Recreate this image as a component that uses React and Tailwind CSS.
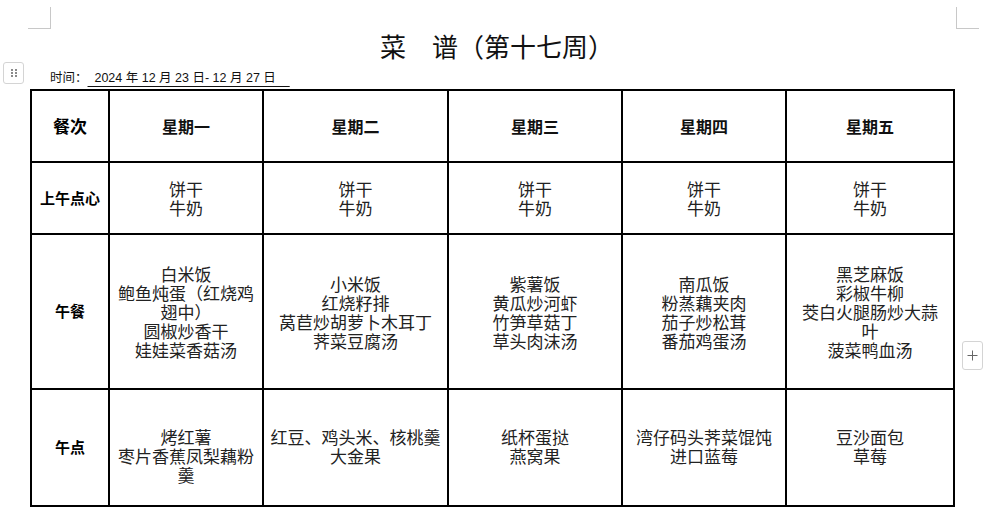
import React from 'react';

const cjk = { fontFamily: '"Noto Sans CJK SC", "Noto Sans", sans-serif' };
const mixed = { fontFamily: '"Liberation Sans", "Noto Sans CJK SC", sans-serif' };

const days = ['星期一', '星期二', '星期三', '星期四', '星期五'];

const rows = [
  {
    label: '上午点心',
    cells: [['饼干', '牛奶'], ['饼干', '牛奶'], ['饼干', '牛奶'], ['饼干', '牛奶'], ['饼干', '牛奶']],
  },
  {
    label: '午餐',
    cells: [
      ['白米饭', '鲍鱼炖蛋（红烧鸡', '翅中）', '圆椒炒香干', '娃娃菜香菇汤'],
      ['小米饭', '红烧籽排', '莴苣炒胡萝卜木耳丁', '荠菜豆腐汤'],
      ['紫薯饭', '黄瓜炒河虾', '竹笋草菇丁', '草头肉沫汤'],
      ['南瓜饭', '粉蒸藕夹肉', '茄子炒松茸', '番茄鸡蛋汤'],
      ['黑芝麻饭', '彩椒牛柳', '茭白火腿肠炒大蒜', '叶', '菠菜鸭血汤'],
    ],
  },
  {
    label: '午点',
    top: true,
    cells: [
      ['烤红薯', '枣片香蕉凤梨藕粉', '羹'],
      ['红豆、鸡头米、核桃羹', '大金果'],
      ['纸杯蛋挞', '燕窝果'],
      ['湾仔码头荠菜馄饨', '进口蓝莓'],
      ['豆沙面包', '草莓'],
    ],
  },
];

function Cell({ lines, top }) {
  return (
    <div
      className={`bg-white flex flex-col items-center px-[6px] text-[17px] leading-[19px] text-[#222] ${
        top ? 'justify-start pt-[37px]' : 'justify-center'
      }`}
    >
      {lines.map((l, i) => (
        <div key={i} className="whitespace-nowrap">
          {l}
        </div>
      ))}
    </div>
  );
}

export default function App() {
  return (
    <div className="relative w-[999px] h-[507px] bg-white overflow-hidden" style={cjk}>
      {/* page corner marks */}
      <div className="flex justify-between pt-[7px] h-[29px]">
        <div className="ml-[28px] w-[23px] h-[22px] border-r border-b border-[#c8c8c8]" />
        <div className="mr-[20px] w-[23px] h-[22px] border-l border-b border-[#c8c8c8]" />
      </div>

      <h1 className="text-center text-[26px] leading-[33px] text-[#111] pr-[5px]">菜　谱（第十七周）</h1>

      <div className="flex items-start h-[24px]">
        <div className="ml-[3px] w-[21px] h-[22px] rounded-[3px] border border-[#d4d4d4] flex items-center justify-center">
          <div className="grid grid-cols-2 gap-x-[2px] gap-y-[1px]">
            {[0, 1, 2, 3, 4, 5].map((i) => (
              <span key={i} className="block w-[2px] h-[2px] bg-[#8a8a8a]" />
            ))}
          </div>
        </div>
        <div className="ml-[26px] mt-[8px] text-[12.5px] leading-[16px] text-[#111] whitespace-pre" style={mixed}>
          时间：
          <span className="underline underline-offset-[4px]">{'  2024 年 12 月 23 日- 12 月 27 日    '}</span>
        </div>
      </div>

      <div className="ml-[30px] mt-[3px] w-[925px] grid grid-cols-[76px_152px_183px_172px_162px_166px] grid-rows-[70px_70px_153px_115px] gap-[2px] p-[2px] bg-black">
        <div className="bg-white flex items-center justify-center text-[17px] font-bold text-black">餐次</div>
        {days.map((d) => (
          <div key={d} className="bg-white flex items-center justify-center text-[16px] font-bold text-[#111]">
            {d}
          </div>
        ))}
        {rows.map((r) => (
          <React.Fragment key={r.label}>
            <div className="bg-white flex items-center justify-center text-[15px] font-bold text-black">
              {r.label}
            </div>
            {r.cells.map((c, i) => (
              <Cell key={i} lines={c} top={r.top} />
            ))}
          </React.Fragment>
        ))}
      </div>

      {/* add-column button */}
      <div className="absolute left-[962px] top-[341px] w-[21px] h-[29px] rounded-[3px] border border-[#d4d4d4] bg-white flex items-center justify-center">
        <svg width="11" height="11" viewBox="0 0 11 11">
          <path d="M5.5 0.5v10M0.5 5.5h10" stroke="#666" strokeWidth="1" />
        </svg>
      </div>
    </div>
  );
}
